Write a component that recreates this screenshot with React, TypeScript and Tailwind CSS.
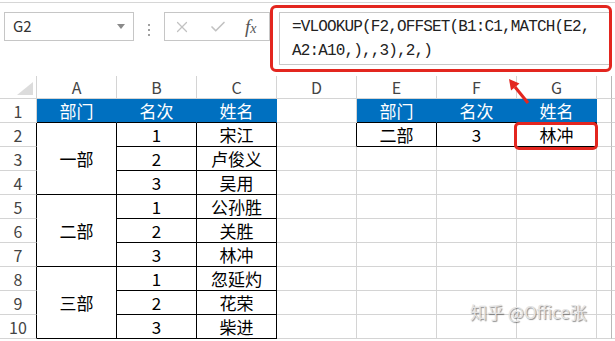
import { Check, X } from "lucide-react";

type Kind = "grid" | "blue" | "data" | "edge" | "rowhead" | "rowheadEdge" | "last" | "none";

const kindClass: Record<Kind, string> = {
  grid: "border-r border-b border-[#d4d4d4]",
  blue: "bg-[#0070c0] text-white border-r border-b border-r-[#0070c0] border-b-black",
  data: "border-r border-b border-black text-black",
  edge: "border-r border-b border-r-black border-b-[#d4d4d4]",
  rowhead: "border-r border-b border-[#d4d4d4] text-[#444] text-[16px]",
  rowheadEdge: "border-r border-b border-r-black border-b-[#d4d4d4] text-[#444] text-[16px]",
  last: "border-r border-b border-r-[#b8b8b8] border-b-[#d4d4d4]",
  none: "border-b border-[#d4d4d4]",
};

type C = { k: Kind; t?: string; span?: boolean };

const rows: C[][] = [
  [
    { k: "rowhead", t: "1" },
    { k: "blue", t: "部门" },
    { k: "blue", t: "名次" },
    { k: "blue", t: "姓名" },
    { k: "grid" },
    { k: "blue", t: "部门" },
    { k: "blue", t: "名次" },
    { k: "blue", t: "姓名" },
    { k: "last" },
    { k: "none" },
  ],
  [
    { k: "rowheadEdge", t: "2" },
    { k: "data", t: "一部", span: true },
    { k: "data", t: "1" },
    { k: "data", t: "宋江" },
    { k: "edge" },
    { k: "data", t: "二部" },
    { k: "data", t: "3" },
    { k: "data", t: "林冲" },
    { k: "last" },
    { k: "none" },
  ],
];

const rest: [string, string, string][] = [
  ["3", "2", "卢俊义"],
  ["4", "3", "吴用"],
  ["5", "1", "公孙胜"],
  ["6", "2", "关胜"],
  ["7", "3", "林冲"],
  ["8", "1", "忽延灼"],
  ["9", "2", "花荣"],
  ["10", "3", "柴进"],
];

rest.forEach(([n, rank, name]) => {
  const r: C[] = [{ k: "rowheadEdge", t: n }];
  if (n === "5") r.push({ k: "data", t: "二部", span: true });
  if (n === "8") r.push({ k: "data", t: "三部", span: true });
  r.push({ k: "data", t: rank }, { k: "data", t: name }, { k: "grid" }, { k: "grid" }, { k: "grid" }, { k: "grid" }, { k: "last" }, { k: "none" });
  rows.push(r);
});

const FormulaBar = () => (
  <div className="mt-[2px] h-[74px] border-t border-[#d6d6d6] flex items-start">
    <div className="ml-[4px] mt-[9px] w-[130px] h-[29px] border border-[#c6c6c6] flex items-center justify-between pl-[8px] pr-[8px] text-[15px] text-[#333]">
      <span>G2</span>
      <span className="w-0 h-0 border-l-[4px] border-r-[4px] border-t-[5px] border-l-transparent border-r-transparent border-t-[#8a8a8a]" />
    </div>
    <div className="ml-[14px] mt-[21px] flex flex-col gap-[3px]">
      <span className="w-[2px] h-[2px] bg-[#a0a0a0]" />
      <span className="w-[2px] h-[2px] bg-[#a0a0a0]" />
      <span className="w-[2px] h-[2px] bg-[#a0a0a0]" />
    </div>
    <div className="ml-[14px] mt-[9px] w-[106px] h-[29px] border border-[#c6c6c6] flex items-center pl-[8px] gap-[18px] text-[#c2c2c2]">
      <X className="size-[18px]" strokeWidth={1.6} />
      <Check className="size-[18px]" strokeWidth={2.2} />
      <span className="font-['Liberation_Serif',serif] italic text-[#555] text-[19px] leading-none">
        f<span className="text-[14px]">x</span>
      </span>
    </div>
    <div className="ml-0 mt-[2px] w-[342px] h-[67px] border-[3px] border-[#e3261f] rounded-[6px] overflow-hidden bg-white">
      <div className="ml-[6px] mt-[4px] h-[53px] border border-[#c8c8c8] border-r-0 pl-[12px] pt-[2px] font-['Liberation_Mono',monospace] text-[16px] tracking-[-0.85px] leading-[24px] text-[#222] whitespace-pre">
        <div>=VLOOKUP(F2,OFFSET(B1:C1,MATCH(E2,</div>
        <div>A2:A10,),,3),2,)</div>
      </div>
    </div>
  </div>
);

export default function App() {
  return (
    <div className="relative w-[615px] h-[341px] bg-white overflow-hidden font-['Noto_Sans_CJK_SC',sans-serif]">
      <FormulaBar />
      <div className="grid grid-cols-[37px_repeat(7,80px)_15px_1fr] grid-rows-[23px_repeat(10,24px)] text-[17px] leading-none">
        <div className="border-r border-b border-[#d4d4d4] flex items-end justify-end pr-[3px] pb-[3px]">
          <svg width="16" height="13" viewBox="0 0 16 13">
            <polygon points="16,0 16,13 0,13" fill="#dcdcdc" />
          </svg>
        </div>
        {["A", "B", "C", "D", "E", "F", "G"].map((c) => (
          <div key={c} className="border-r border-b border-[#d4d4d4] flex items-center justify-center text-[16px] text-[#444]">
            {c}
          </div>
        ))}
        <div className="border-r border-b border-r-[#b8b8b8] border-b-[#d4d4d4]" />
        <div className="border-b border-[#d4d4d4]" />
        {rows.map((r, i) =>
          r.map((c, j) => (
            <div
              key={`${i}-${j}`}
              className={`${kindClass[c.k]} ${c.span ? "row-span-3" : ""} flex items-center justify-center`}
            >
              {c.t}
            </div>
          ))
        )}
      </div>

      {/* annotations */}
      <div className="absolute left-[514px] top-[122px] w-[84px] h-[28px] border-[3px] border-[#e3261f] rounded-[5px]" />
      <svg className="absolute left-0 top-0" width="615" height="341">
        <line x1="528" y1="103" x2="515" y2="87" stroke="#e3261f" strokeWidth="3" />
        <polygon points="509,79 519.5,83.5 511,90.5" fill="#e3261f" />
      </svg>
      <div className="absolute left-[470px] top-[303px] text-[17px] leading-none text-[#e4e4e4] [text-shadow:1px_1px_1px_rgba(0,0,0,0.45)] font-['Noto_Sans_CJK_SC',sans-serif]">
        知乎 @Office张
      </div>
    </div>
  );
}
